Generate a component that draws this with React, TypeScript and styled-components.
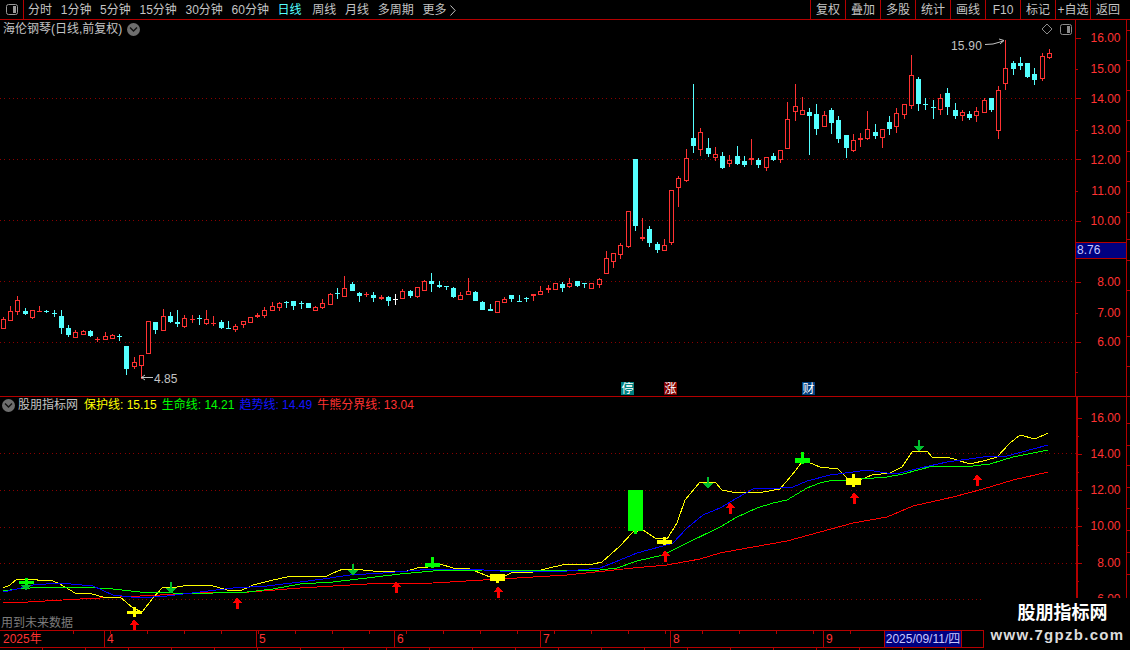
import React from "react";
import styled, { createGlobalStyle } from "styled-components";

const FONT = `"Liberation Sans", "Noto Sans CJK SC", sans-serif`;
const LINE = "#b40000";
const RED = "#ff3232";
const CYAN = "#54ffff";

const Global = createGlobalStyle`
  html, body { margin: 0; padding: 0; background: #000; }
  body { font-family: ${FONT}; font-size: 12px; }
`;

type K = "r" | "c" | "w";
// body top, body bottom, high, low, kind: pixel rows of the chart
const CANDLES: [number, number, number, number, K][] = [
  [319,328,317,328,"r"],[311,320,306,321,"r"],[300,311,296,315,"r"],[311,314,308,315,"c"],[310,317,310,319,"r"],
  [311,312,306,312,"r"],[311,312,310,313,"c"],[313,314,310,317,"c"],[316,328,310,334,"c"],[328,335,325,337,"c"],
  [332,337,330,338,"r"],[331,334,330,335,"r"],[331,336,330,337,"c"],[339,340,337,342,"r"],[336,339,332,340,"r"],
  [335,338,334,338,"r"],[336,337,334,341,"c"],[346,369,346,375,"c"],[362,366,357,369,"r"],[355,365,355,379,"r"],
  [321,353,321,353,"r"],[322,330,322,334,"c"],[316,330,309,331,"r"],[316,322,312,323,"c"],[322,324,310,327,"c"],
  [318,326,315,328,"r"],[319,320,315,323,"r"],[318,319,315,325,"c"],[319,323,310,325,"r"],[323,324,316,326,"r"],
  [322,328,320,329,"c"],[328,329,321,329,"c"],[326,329,324,332,"r"],[321,324,321,328,"r"],[317,322,317,322,"r"],
  [315,317,313,318,"r"],[310,315,307,318,"r"],[306,310,302,311,"r"],[303,307,302,311,"r"],[302,303,301,308,"c"],
  [301,306,301,310,"c"],[303,304,301,309,"c"],[303,308,303,308,"c"],[307,310,306,310,"r"],[303,307,299,309,"r"],
  [294,304,293,305,"r"],[293,294,288,299,"c"],[288,296,276,296,"r"],[284,291,282,291,"c"],[293,296,292,302,"c"],
  [294,295,292,297,"r"],[295,298,292,302,"c"],[297,299,295,300,"r"],[297,301,296,306,"c"],[299,300,294,305,"w"],
  [291,298,289,298,"r"],[291,296,290,298,"c"],[287,296,287,298,"r"],[281,290,280,291,"r"],[281,284,273,292,"c"],
  [285,287,281,288,"c"],[286,287,286,290,"c"],[288,297,287,298,"c"],[295,299,292,299,"r"],[291,294,278,294,"r"],
  [292,301,291,301,"c"],[302,310,301,310,"c"],[309,311,304,311,"c"],[301,312,301,313,"r"],[299,302,297,302,"r"],
  [295,299,295,302,"c"],[301,302,295,302,"c"],[298,299,297,302,"c"],[294,296,294,301,"r"],[291,294,286,294,"r"],
  [288,290,285,293,"r"],[283,289,283,289,"r"],[284,288,282,292,"c"],[283,286,278,288,"r"],[281,286,281,287,"c"],
  [283,284,283,288,"c"],[283,288,283,288,"r"],[279,284,278,288,"r"],[258,273,251,274,"r"],[253,261,253,268,"r"],
  [245,254,243,259,"r"],[211,246,211,248,"r"],[159,226,159,231,"c"],[237,239,218,241,"r"],[229,243,226,247,"c"],
  [244,250,242,253,"c"],[245,250,239,251,"r"],[190,242,190,245,"r"],[178,187,176,207,"r"],[158,180,149,182,"r"],
  [138,146,84,153,"c"],[132,149,128,156,"r"],[148,154,138,157,"c"],[154,157,147,161,"r"],[156,168,152,169,"c"],
  [160,163,155,167,"r"],[156,164,146,165,"c"],[161,165,156,167,"c"],[158,160,139,165,"r"],[160,165,158,168,"c"],
  [157,167,157,171,"r"],[156,160,153,161,"c"],[150,159,150,163,"r"],[119,148,102,148,"r"],[106,111,84,121,"r"],
  [110,114,97,114,"r"],[112,116,108,155,"c"],[114,129,104,135,"c"],[115,126,111,126,"r"],[110,123,108,134,"c"],
  [120,139,116,143,"c"],[135,148,135,158,"c"],[140,150,134,152,"r"],[138,140,133,147,"r"],[129,138,111,140,"r"],
  [132,136,124,139,"c"],[129,137,129,148,"r"],[122,129,116,135,"c"],[113,126,108,133,"r"],[104,114,104,119,"r"],
  [75,105,55,109,"r"],[79,104,77,111,"c"],[104,105,98,110,"c"],[107,108,100,119,"c"],[98,109,94,115,"r"],
  [93,107,88,115,"c"],[110,116,103,119,"c"],[112,115,110,121,"r"],[114,118,111,120,"c"],[111,115,107,122,"r"],
  [100,112,98,112,"r"],[98,110,98,112,"c"],[90,130,86,139,"r"],[68,83,40,90,"r"],[63,69,61,75,"c"],
  [63,66,57,70,"c"],[63,77,63,78,"c"],[74,80,68,85,"c"],[56,78,53,81,"r"],[53,57,49,59,"r"],
];

const YELLOW = "3,588 10,585 17,579 25,579 33,579 42,581 50,580 58,583 65,587 75,593 92,594 103,597 120,597 133,608 142,612 153,598 163,587 177,587 190,585 210,585 227,590 240,591 253,585 273,580 287,577 300,576 325,577 333,573 343,569 363,570 383,572 407,571 417,568 428,567 440,564 453,568 470,569 490,577 503,577 513,572 533,572 553,567 567,564 593,564 602,562 620,546 633,532 643,530 655,538 667,539 677,523 685,500 700,482 715,482 722,490 737,493 747,492 763,492 780,489 792,475 802,462 808,462 820,467 838,469 847,478 860,480 872,475 890,473 902,467 912,452 927,451 933,458 947,457 970,464 987,460 997,457 1010,443 1020,435 1035,439 1048,433";
const BLUE = "3,592 17,589 33,585 60,583 93,586 113,595 140,598 167,596 200,592 233,588 267,586 300,582 323,579 350,575 383,573 433,569 467,569 500,571 567,571 600,568 620,560 637,553 663,546 673,543 687,528 703,515 720,508 737,498 753,489 780,488 793,487 807,481 830,475 853,472 867,470 887,473 900,473 920,468 947,462 983,457 1007,456 1048,445";
const GREEN = "3,591 17,589 43,587 83,587 113,589 140,592 173,593 213,593 247,592 273,589 300,584 333,582 367,578 400,574 433,571 483,570 533,571 600,570 617,568 637,561 663,555 683,545 720,527 737,517 757,508 773,503 787,500 807,488 820,483 833,480 847,480 887,477 903,474 933,466 973,466 990,464 1013,457 1048,450";
const REDLINE = "3,603 28,602 80,599 120,597 200,593 250,592 300,588 367,584 433,583 500,579 567,575 633,568 667,565 700,559 720,553 753,547 787,541 820,532 853,523 887,517 913,506 953,497 983,489 1013,480 1048,472";

const UP: [number, number][] = [[134,619],[237,597],[396,581],[498,586],[665,550],[730,502],[854,492],[977,474]];
const DOWN: [number, number][] = [[26,579],[171,582],[353,564],[708,477],[919,440]];
const GCROSS: [number, number, number, number][] = [[432,563,4,557],[802,458,5,452],[26,581,3,578]];
const YCROSS: [number, number, number, number, number][] = [
  [134,611,3,607,617],[497,574,7,574,583],[664,540,4,537,545],[853,478,7,474,487],
];
const MONTHS: { label: string; w: number }[] = [
  { label: "2025年", w: 104 }, { label: "4", w: 152 }, { label: "5", w: 138 },
  { label: "6", w: 146 }, { label: "7", w: 130 }, { label: "8", w: 153 }, { label: "9", w: 61 },
];
const TABS = ["分时","1分钟","5分钟","15分钟","30分钟","60分钟","日线","周线","月线","多周期"];
const TOOLS = ["复权","叠加","多股","统计","画线","F10","标记","+自选","返回"];

const Page = styled.div`
  position: relative; width: 1130px; height: 650px; overflow: hidden;
  background: #000; display: flex; flex-direction: column;
  font-family: ${FONT}; font-size: 12px; color: #c4c4c4;
`;
const Toolbar = styled.div`
  height: 19px; flex: none; display: flex; align-items: stretch;
  border-bottom: 1px solid ${LINE};
`;
const PanelToggle = styled.div`
  width: 23px; flex: none; border-right: 1px solid ${LINE};
  display: flex; align-items: center; justify-content: center;
`;
const Tabs = styled.div`
  display: flex; align-items: center; gap: 8.7px; padding: 1px 0 0 4px; flex: 1; line-height: 18px;
`;
const Tab = styled.span<{ $active?: boolean }>`
  color: ${(p) => (p.$active ? CYAN : "#c4c4c4")};
  margin-right: ${(p) => (p.$active ? "2px" : "0")};
  white-space: nowrap; display: inline-flex; align-items: center; gap: 4px;
`;
const Tools = styled.div`display: flex; padding-right: 5px;`;
const Tool = styled.div`
  width: 34px; border-left: 1px solid ${LINE}; text-align: center; line-height: 20px; white-space: nowrap;
`;
const PricePanel = styled.div`
  position: relative; height: 376px; flex: none; display: flex; border-bottom: 1px solid ${LINE};
`;
const IndicatorPanel = styled.div`
  position: relative; height: 233px; flex: none; display: flex;
`;
const Drawing = styled.svg`
  display: block; flex: none; font-family: ${FONT}; font-size: 12px;
`;
const ChartTitle = styled.div`
  position: absolute; left: 3px; top: 1px; display: flex; align-items: center; gap: 5px;
  line-height: 16px; white-space: nowrap;
`;
const IndicatorTitle = styled.div`
  position: absolute; left: 2px; top: 0; display: flex; align-items: center; line-height: 16px; white-space: nowrap;
`;
const IndicatorName = styled.span`margin: 0 6px 0 3px;`;
const Legend = styled.span<{ $color: string }>`color: ${(p) => p.$color}; margin-right: 5px;`;
const Round = styled.span`
  width: 13px; height: 13px; border-radius: 50%; background: #6e6e6e;
  display: inline-flex; align-items: center; justify-content: center;
`;
const Notice = styled.div`
  position: absolute; left: 1px; bottom: -1px; color: #7c7c7c; line-height: 16px; white-space: nowrap;
`;
const TimeAxis = styled.div`
  height: 18px; flex: none; display: flex; width: 984px; box-sizing: border-box;
  border-top: 1px solid ${LINE}; border-bottom: 1px solid ${LINE}; border-right: 1px solid ${LINE};
  background: repeating-linear-gradient(to right, transparent 0 36px, ${LINE} 36px 37px) top left / 100% 3px no-repeat;
  color: ${RED}; line-height: 17px;
`;
const Month = styled.div<{ $w: number }>`
  width: ${(p) => p.$w}px; flex: none; box-sizing: border-box; padding-left: 2px;
  border-left: 1px solid ${LINE}; white-space: nowrap;
  &:first-child { border-left: 0; padding-left: 3px; }
`;
const DateBox = styled.div`
  width: 78px; flex: none; box-sizing: border-box; background: #000080; color: #c8c8ff;
  border: 1px solid ${LINE}; border-width: 0 1px; text-align: center; white-space: nowrap;
`;
const BottomStrip = styled.div`
  flex: 1; background:
    repeating-linear-gradient(to right, transparent 0 42px, ${LINE} 42px 43px);
`;
const Watermark = styled.div`
  position: absolute; right: 0; bottom: 0; width: 145px; height: 49px; background: #000;
  display: flex; flex-direction: column; align-items: center; justify-content: flex-start; padding-top: 3px;
`;
const MarkName = styled.div`
  font-size: 18px; font-weight: 700; color: #fff; line-height: 24px; letter-spacing: 0;
  margin-left: 10px;
`;
const MarkUrl = styled.div`
  font-size: 15px; font-weight: 700; color: #dcdcdc; line-height: 18px; letter-spacing: 1.3px; white-space: nowrap;
  margin-top: 1px;
`;

const Chevron = () => (
  <svg width="9" height="7" viewBox="0 0 9 7"><polyline points="1,1.5 4.5,5 8,1.5" fill="none" stroke="#111" strokeWidth="1.4" /></svg>
);
const SplitIcon = ({ x, y }: { x: number; y: number }) => (
  <g>
    <rect x={x + 0.5} y={y + 0.5} width={11} height={10} rx={2} fill="none" stroke="#8c8c8c" />
    <rect x={x + 7} y={y + 2} width={3} height={7} fill="#8c8c8c" />
  </g>
);

const Candles = () => (
  <g shapeRendering="crispEdges">
    {CANDLES.map(([top, bot, hi, lo, kind], i) => {
      const cx = Math.floor(3.3 + 7.265 * i);
      const color = kind === "r" ? RED : kind === "c" ? CYAN : "#ffffff";
      const hollow = kind === "r" && bot - top > 2;
      return (
        <g key={i}>
          {hi < top && <rect x={cx} y={hi} width={1} height={top - hi} fill={color} />}
          {lo > bot && <rect x={cx} y={bot} width={1} height={lo - bot} fill={color} />}
          <rect x={cx - 2} y={top} width={5} height={Math.max(1, bot - top + (hollow ? 1 : 0))} fill={color} />
          {hollow && <rect x={cx - 1} y={top + 1} width={3} height={bot - top - 1} fill="#000" />}
        </g>
      );
    })}
  </g>
);

const dots = (ys: number[], w: number) =>
  ys.map((y) => (
    <line key={y} x1={0} x2={w} y1={y + 0.5} y2={y + 0.5} stroke="#8a0000" strokeDasharray="1 3.3" shapeRendering="crispEdges" />
  ));

const Badge = ({ x, fill, text }: { x: number; fill: string; text: string }) => (
  <g>
    <rect x={x} y={382} width={13} height={13} fill={fill} />
    <text x={x + 0.5} y={393} fill="#fff">{text}</text>
  </g>
);

const PriceDrawing = () => (
  <Drawing width={1075} height={376} viewBox="0 20 1075 376">
    {dots([98, 159, 220, 281, 342], 1075)}
    <Candles />
    <text x={951} y={49.5} fill="#c4c4c4" letterSpacing={0.2}>15.90</text>
    <polyline points="985,44.5 993,44 1000,42 1004,40.5" fill="none" stroke="#c4c4c4" />
    <polyline points="999,39 1004,40.5 1000,44" fill="none" stroke="#c4c4c4" />
    <text x={154} y={382.5} fill="#c4c4c4">4.85</text>
    <polyline points="141,377.5 153,377.5" fill="none" stroke="#c4c4c4" />
    <polyline points="145,375 141.5,377.5 145,380" fill="none" stroke="#c4c4c4" />
    <Badge x={621} fill="#008080" text="停" />
    <Badge x={664} fill="#800000" text="涨" />
    <Badge x={802} fill="#003f7f" text="财" />
    <polygon points="1047,24 1052,29 1047,34 1042,29" fill="none" stroke="#8c8c8c" />
    <SplitIcon x={1060} y={24} />
  </Drawing>
);

const ArrowUp = ({ x, y }: { x: number; y: number }) => (
  <g shapeRendering="crispEdges">
    <polygon points={`${x},${y} ${x + 5},${y + 6} ${x - 4},${y + 6}`} fill="#ff0000" />
    <rect x={x - 1} y={y + 5} width={3} height={7} fill="#ff0000" />
  </g>
);
const ArrowDown = ({ x, y }: { x: number; y: number }) => (
  <g shapeRendering="crispEdges">
    <rect x={x - 1} y={y} width={2} height={7} fill="#00c030" />
    <polygon points={`${x - 5},${y + 6} ${x + 5},${y + 6} ${x},${y + 12}`} fill="#00c030" />
  </g>
);

const IndicatorDrawing = () => (
  <Drawing width={1076} height={233} viewBox="0 397 1076 233">
    {dots([453, 490, 527, 563, 599], 1076)}
    <g fill="none" shapeRendering="crispEdges">
      <polyline points={REDLINE} stroke="#ff0000" strokeWidth={1} />
      <polyline points={YELLOW} stroke="#ffff00" strokeWidth={1} />
      <polyline points={GREEN} stroke="#00ff00" strokeWidth={1} />
      <polyline points={BLUE} stroke="#0000ff" strokeWidth={1} />
    </g>
    <g shapeRendering="crispEdges">
      <rect x={628} y={490} width={15} height={41} fill="#00ff00" />
      <rect x={634} y={531} width={3} height={3} fill="#00ff00" />
      {DOWN.map(([x, y]) => <ArrowDown key={x} x={x} y={y} />)}
      {GCROSS.map(([x, y, h, t]) => (
        <g key={x}>
          <rect x={x - 7.5} y={y} width={15} height={h} fill="#00ff00" />
          <rect x={x - 1.5} y={t} width={3} height={y + h + 1 - t} fill="#00ff00" />
        </g>
      ))}
      {YCROSS.map(([x, y, h, t, b]) => (
        <g key={x}>
          <rect x={x - 7.5} y={y} width={15} height={h} fill="#ffff00" />
          <rect x={x - 1.5} y={t} width={3} height={b - t} fill="#ffff00" />
        </g>
      ))}
      {UP.map(([x, y]) => <ArrowUp key={x} x={x} y={y} />)}
    </g>
  </Drawing>
);

const Axis = ({ x, y, h, line, labels, minor, major, edge, tag }: {
  x: number; y: number; h: number; line: number; labels: [string, number][];
  minor: number[]; major: number[]; edge: number[]; tag?: boolean;
}) => (
  <Drawing width={1130 - x} height={h} viewBox={`${x} ${y} ${1130 - x} ${h}`}>
    <g fill={LINE} shapeRendering="crispEdges">
      <rect x={x} y={y} width={line} height={h} />
      <rect x={1126} y={y} width={1} height={h} />
      {major.map((t) => <rect key={t} x={x} y={t} width={6} height={1} />)}
      {minor.map((t) => <rect key={t} x={x} y={t} width={3} height={1} />)}
      {edge.map((t) => <rect key={t} x={1126} y={t} width={4} height={1} />)}
    </g>
    {labels.map(([s, t]) => (
      <text key={s} x={1120.5} y={t + 4} textAnchor="end" fill={RED}>{s}</text>
    ))}
    {tag && (
      <g>
        <rect x={1076} y={243} width={50} height={15} fill="#000080" />
        <rect x={1075.5} y={242.5} width={51} height={16} fill="none" stroke={LINE} shapeRendering="crispEdges" />
        <text x={1077} y={254} fill="#c8c8ff">8.76</text>
      </g>
    )}
  </Drawing>
);

const PRICE_LABELS: [string, number][] = [
  ["16.00",38],["15.00",69],["14.00",99],["13.00",130],["12.00",160],["11.00",191],["10.00",221],["8.00",282],["7.00",313],["6.00",342],
];
const IND_LABELS: [string, number][] = [
  ["16.00",418],["14.00",454],["12.00",490],["10.00",526],["8.00",563],["6.00",599],
];

export default function App() {
  return (
    <Page>
      <Global />
      <Toolbar>
        <PanelToggle>
          <svg width="14" height="13" viewBox="0 0 14 13">
            <rect x="1.5" y="1.5" width="11" height="10" rx="2" fill="none" stroke="#9a9a9a" />
            <rect x="8" y="3" width="3" height="7" fill="#9a9a9a" />
          </svg>
        </PanelToggle>
        <Tabs>
          {TABS.map((t) => <Tab key={t} $active={t === "日线"}>{t}</Tab>)}
          <Tab>
            更多
            <svg width="6" height="11" viewBox="0 0 6 11"><polyline points="0.5,0.5 5.2,5.5 0.5,10.5" fill="none" stroke="#c4c4c4" /></svg>
          </Tab>
        </Tabs>
        <Tools>{TOOLS.map((t) => <Tool key={t}>{t}</Tool>)}</Tools>
      </Toolbar>

      <PricePanel>
        <PriceDrawing />
        <Axis x={1075} y={20} h={376} line={1} tag labels={PRICE_LABELS}
          major={[38,98,159,221,282,342]} minor={[69,130,191,252,313,372]} edge={[30,60,90,120,151,181,212,239,260,290,336,366]} />
        <ChartTitle>
          <span>海伦钢琴(日线,前复权)</span>
          <Round><Chevron /></Round>
        </ChartTitle>
      </PricePanel>

      <IndicatorPanel>
        <IndicatorDrawing />
        <Axis x={1076} y={397} h={233} line={2} labels={IND_LABELS}
          major={[418,454,490,526,563,599]} minor={[436,472,508,545,581,617]} edge={[423,445,465,487,508,530,552,574]} />
        <IndicatorTitle>
          <Round><Chevron /></Round>
          <IndicatorName>股朋指标网</IndicatorName>
          <Legend $color="#ffff00">保护线: 15.15</Legend>
          <Legend $color="#00ff00">生命线: 14.21</Legend>
          <Legend $color="#1414ff">趋势线: 14.49</Legend>
          <Legend $color={RED}>牛熊分界线: 13.04</Legend>
        </IndicatorTitle>
        <Notice>用到未来数据</Notice>
      </IndicatorPanel>

      <TimeAxis>
        {MONTHS.map((m) => <Month key={m.label} $w={m.w}>{m.label}</Month>)}
        <DateBox>2025/09/11/四</DateBox>
      </TimeAxis>
      <BottomStrip />

      <Watermark>
        <MarkName>股朋指标网</MarkName>
        <MarkUrl>www.7gpzb.com</MarkUrl>
      </Watermark>
    </Page>
  );
}
